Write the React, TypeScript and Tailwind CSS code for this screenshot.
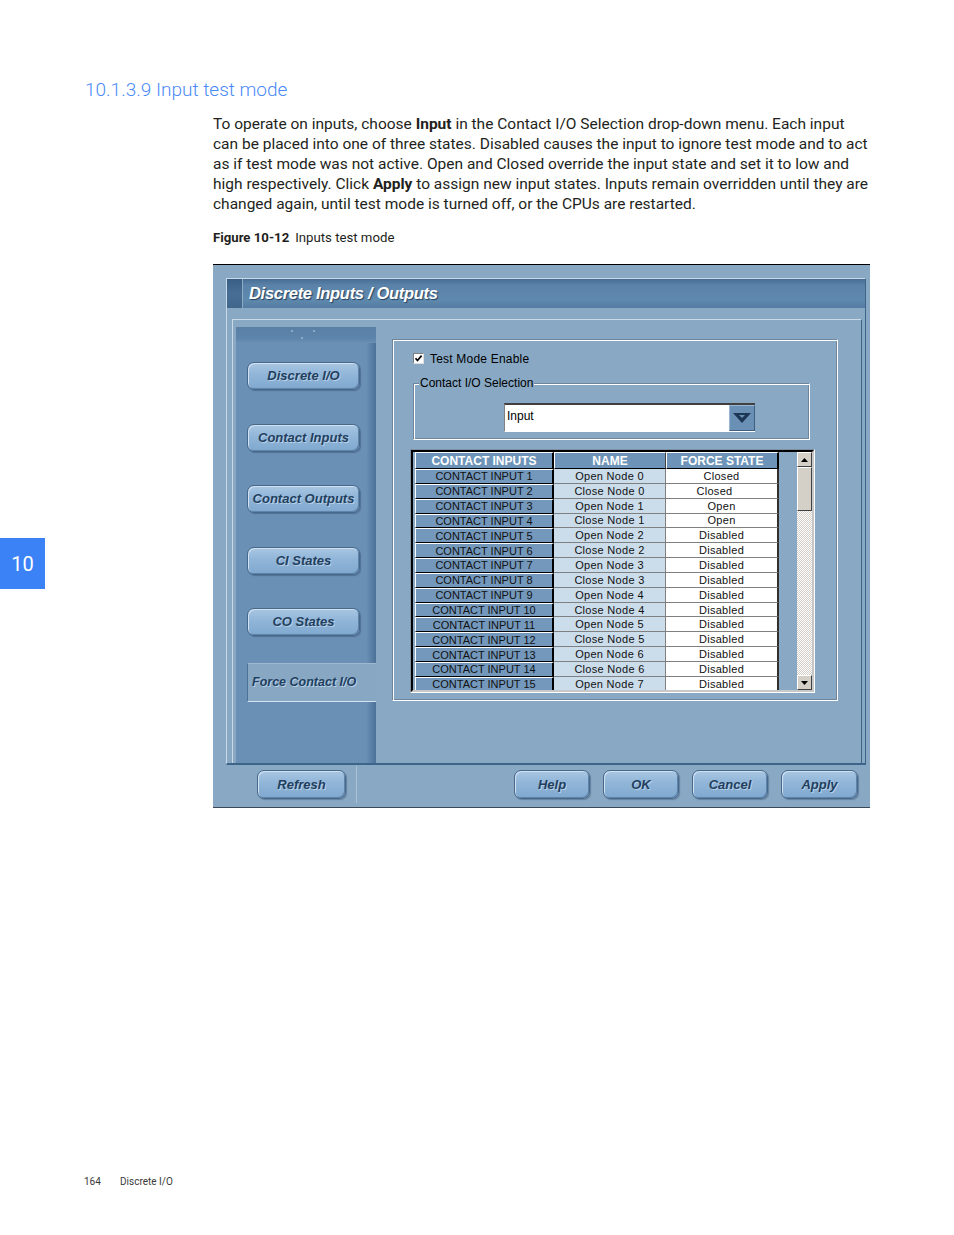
import React from "react";

const rows: [string, string][] = [
  ["Open Node 0", "Closed"],
  ["Close Node 0", "Closed"],
  ["Open Node 1", "Open"],
  ["Close Node 1", "Open"],
  ["Open Node 2", "Disabled"],
  ["Close Node 2", "Disabled"],
  ["Open Node 3", "Disabled"],
  ["Close Node 3", "Disabled"],
  ["Open Node 4", "Disabled"],
  ["Close Node 4", "Disabled"],
  ["Open Node 5", "Disabled"],
  ["Close Node 5", "Disabled"],
  ["Open Node 6", "Disabled"],
  ["Close Node 6", "Disabled"],
  ["Open Node 7", "Disabled"],
];

function NavBtn({ label, mt }: { label: string; mt: string }) {
  return (
    <div
      className={`${mt} ml-[11px] w-[113px] h-[28px] shrink-0 rounded-[7px] border border-[#46688b] bg-[linear-gradient(180deg,#a8c6e2_0%,#90b5d8_45%,#80a8cf_100%)] shadow-[inset_1px_1px_0_#d2e2f1,inset_-1px_-1px_0_#5f84aa,1px_1px_1px_rgba(35,55,85,0.35)] flex items-center justify-center text-[13px] font-bold italic text-[#223f60] [text-shadow:1px_1px_0_#b8d0e6]`}
    >
      {label}
    </div>
  );
}

function Btn({ label, w }: { label: string; w: string }) {
  return (
    <div
      className={`${w} mt-[5px] h-[29px] shrink-0 rounded-[7px] border border-[#46688b] bg-[linear-gradient(180deg,#a8c6e2_0%,#90b5d8_45%,#80a8cf_100%)] shadow-[inset_1px_1px_0_#d2e2f1,inset_-1px_-1px_0_#5f84aa,1px_1px_1px_rgba(35,55,85,0.35)] flex items-center justify-center text-[13px] font-bold italic text-[#223f60] [text-shadow:1px_1px_0_#b8d0e6]`}
    >
      {label}
    </div>
  );
}

function ScrollBtn({ up }: { up: boolean }) {
  return (
    <div className="h-[15px] shrink-0 bg-[#d4d0c8] border border-t-white border-l-white border-r-[#404040] border-b-[#404040] flex items-center justify-center">
      <svg width="7" height="4" viewBox="0 0 7 4">
        {up ? <polygon points="0,4 7,4 3.5,0" fill="#000" /> : <polygon points="0,0 7,0 3.5,4" fill="#000" />}
      </svg>
    </div>
  );
}

export default function App() {
  return (
    <div className="relative w-[954px] h-[1235px] bg-white flex flex-col font-['Roboto','Open_Sans',sans-serif] text-[#231f20]">
      <h2 className="mt-[78px] ml-[85px] text-[19px] leading-[24px] font-light text-[#4a8af5]">
        10.1.3.9 Input test mode
      </h2>

      <div className="ml-[213px] mt-[12px] text-[15.5px] leading-[20px]">
        <div className="whitespace-nowrap">
          To operate on inputs, choose <b className="font-bold">Input</b> in the Contact I/O Selection drop-down menu. Each input
        </div>
        <div className="whitespace-nowrap">
          can be placed into one of three states. Disabled causes the input to ignore test mode and to act
        </div>
        <div className="whitespace-nowrap">
          as if test mode was not active. Open and Closed override the input state and set it to low and
        </div>
        <div className="whitespace-nowrap">
          high respectively. Click <b className="font-bold">Apply</b> to assign new input states. Inputs remain overridden until they are
        </div>
        <div className="whitespace-nowrap">
          changed again, until test mode is turned off, or the CPUs are restarted.
        </div>
      </div>

      <div className="ml-[213px] mt-[15px] text-[13.2px] leading-[18px]">
        <b className="font-bold">Figure 10-12</b>
        <span className="ml-[6px]">Inputs test mode</span>
      </div>

      {/* Figure */}
      <div className="ml-[213px] mt-[17px] w-[657px] h-[544px] shrink-0 bg-[#88a8c4] border-t border-t-black border-b border-b-[#3b4856] flex flex-col font-['Liberation_Sans',Arial,sans-serif]">
        {/* frame */}
        <div className="mt-[13px] ml-[13px] w-[640px] h-[487px] shrink-0 border-t border-l border-t-[#c9d9e7] border-l-[#c9d9e7] border-r border-r-[#3d6489] border-b-2 border-b-[#3d6489] flex flex-col">
          {/* title bar */}
          <div className="h-[29px] shrink-0 flex bg-[linear-gradient(180deg,#476d93_0%,#5b83a9_22%,#6089ae_70%,#557ca2_100%)]">
            <div className="w-[16px] bg-[linear-gradient(180deg,#395e84_0%,#486e95_50%,#40668c_100%)] border-r border-r-[#8eabc6]"></div>
            <div className="ml-[6px] flex items-center text-white font-bold italic text-[16.5px] tracking-[-0.3px] [text-shadow:1px_1px_1px_#23405e]">
              Discrete Inputs / Outputs
            </div>
          </div>

          {/* inner panel */}
          <div className="mt-[11px] ml-[5px] mr-[3px] flex-1 border-t border-l border-t-[#c9d9e7] border-l-[#c9d9e7] border-r border-r-[#3d6489] pl-[3px] pt-[7px] flex">
            {/* nav column */}
            <div className="w-[140px] flex flex-col bg-[linear-gradient(90deg,#6a90b5_0%,#6a90b5_93%,#4b7198_100%)]">
              <div className="h-[16px] shrink-0 bg-[linear-gradient(180deg,#5a80a6_0%,#5d84aa_70%,#6a90b5_100%)]">
                <svg width="140" height="16" viewBox="0 0 140 16" className="block">
                  <circle cx="56" cy="4" r="1" fill="#9ab6cf" />
                  <circle cx="66" cy="11" r="1" fill="#9ab6cf" />
                  <circle cx="78" cy="4" r="1" fill="#9ab6cf" />
                </svg>
              </div>
              <NavBtn label="Discrete I/O" mt="mt-[19px]" />
              <NavBtn label="Contact Inputs" mt="mt-[34px]" />
              <NavBtn label="Contact Outputs" mt="mt-[33px]" />
              <NavBtn label="CI States" mt="mt-[34px]" />
              <NavBtn label="CO States" mt="mt-[33px]" />
              <div className="mt-[27px] ml-[11px] w-[129px] h-[39px] shrink-0 bg-[#87a7c3] border-t border-t-[#9fb9d0] border-b border-b-[#d5e2ee] border-l border-l-[#4e7196] flex items-center pl-[4px] text-[12.5px] font-bold italic text-[#223f60] [text-shadow:1px_1px_0_#b8d0e6]">
                Force Contact I/O
              </div>
            </div>

            {/* content panel */}
            <div className="ml-[16px] mt-[12px] w-[446px] h-[362px] shrink-0 border border-t-[#6f859b] border-l-[#6f859b] border-r-white border-b-white shadow-[inset_1px_1px_0_#ffffff,inset_-1px_-1px_0_#6f859b] flex flex-col">
              {/* checkbox row */}
              <div className="mt-[13px] ml-[20px] flex items-center h-[11px]">
                <div className="w-[11px] h-[11px] bg-white border border-t-[#808080] border-l-[#808080] border-r-[#e0e0e0] border-b-[#e0e0e0] flex items-center justify-center">
                  <svg width="9" height="9" viewBox="0 0 9 9">
                    <path d="M1.5 4.2 L3.5 6.5 L7.6 1.6" stroke="#000" strokeWidth="1.7" fill="none" />
                  </svg>
                </div>
                <span className="ml-[6px] text-[12px] tracking-[0.2px] text-black leading-none">Test Mode Enable</span>
              </div>

              {/* group box */}
              <div className="relative mt-[19px] ml-[20px] w-[397px] h-[57px] shrink-0 border border-t-[#6f859b] border-l-[#6f859b] border-r-white border-b-white shadow-[inset_1px_1px_0_#ffffff,inset_-1px_-1px_0_#6f859b]">
                <span className="absolute -top-[8px] left-[5px] bg-[#88a8c4] px-[1px] text-[12px] leading-[14px] text-black">
                  Contact I/O Selection
                </span>
                <div className="mt-[19px] ml-[90px] w-[251px] h-[29px] flex border-t-2 border-t-[#404040] border-l border-l-[#808080] border-b border-b-white">
                  <div className="flex-1 bg-white pl-[2px] pt-[4px] text-[12px] leading-[14px] text-black">Input</div>
                  <div className="w-[26px] bg-[#6a90b5] border border-t-[#9ab8d4] border-l-[#9ab8d4] border-r-[#3c5e80] border-b-[#3c5e80] flex items-center justify-center">
                    <svg width="18" height="10" viewBox="0 0 18 10">
                      <polygon points="0,0 18,0 9,10" fill="#1d3654" />
                      <polygon points="6,2 12,2 9,5" fill="#6a90b5" />
                    </svg>
                  </div>
                </div>
              </div>

              {/* table container */}
              <div className="mt-[9px] ml-[17px] w-[405px] h-[244px] shrink-0 border border-t-[#7d8fa1] border-l-[#7d8fa1] border-r-white border-b-white">
                <div className="w-full h-full border-2 border-t-black border-l-black border-r-[#c8c8c8] border-b-[#c8c8c8] flex">
                  <div className="pl-[2px] w-[366px] h-full overflow-hidden flex flex-col">
                    <div className="flex h-[17px] shrink-0 text-[12px] font-bold text-white leading-none">
                      <div className="w-[139px] bg-[#6d94b8] border-t border-l border-t-white border-l-white border-r-2 border-b border-r-black border-b-black flex items-center justify-center">
                        CONTACT INPUTS
                      </div>
                      <div className="w-[112px] bg-[#6d94b8] border-t border-l border-t-white border-l-white border-r border-b border-r-[#404040] border-b-black flex items-center justify-center">
                        NAME
                      </div>
                      <div className="w-[113px] bg-[#6d94b8] border-t border-l border-t-white border-l-white border-r-2 border-b border-r-black border-b-black flex items-center justify-center">
                        FORCE STATE
                      </div>
                    </div>
                    {rows.map((r, i) => (
                      <div key={i} className="flex h-[14.85px] shrink-0 text-[11px] leading-none text-[#111]">
                        <div className="w-[139px] pt-[1px] bg-[#7498bc] border-t border-l border-t-white border-l-white border-r-2 border-b border-r-black border-b-black flex items-center justify-center">
                          CONTACT INPUT {i + 1}
                        </div>
                        <div className="w-[112px] pt-[1px] bg-[#cbdceb] border-b border-r border-b-[#808080] border-r-[#808080] flex items-center justify-center tracking-[0.3px]">
                          {r[0]}
                        </div>
                        <div
                          className={`w-[113px] pt-[1px] bg-white border-b border-b-[#808080] border-r-2 border-r-[#303030] flex items-center justify-center tracking-[0.3px] ${i === 1 ? "pr-[14px]" : ""}`}
                        >
                          {r[1]}
                        </div>
                      </div>
                    ))}
                  </div>
                  <div className="flex-1" />
                  <div className="w-[15px] h-full flex flex-col">
                    <ScrollBtn up={true} />
                    <div className="h-[44px] shrink-0 bg-[#d4d0c8] border border-t-white border-l-white border-r-[#404040] border-b-[#404040]" />
                    <div className="flex-1 bg-[repeating-conic-gradient(#d4d0c8_0%_25%,#ffffff_0%_50%)] bg-[length:2px_2px]" />
                    <ScrollBtn up={false} />
                  </div>
                </div>
              </div>
            </div>
          </div>
        </div>

        {/* bottom buttons bar */}
        <div className="flex-1 flex items-start">
          <div className="ml-[44px]">
            <Btn label="Refresh" w="w-[89px]" />
          </div>
          <div className="ml-[10px] mt-[1px] w-px h-[37px] bg-[#a9c1d6]" />
          <div className="ml-auto mr-[12px] flex gap-[13px]">
            <Btn label="Help" w="w-[76px]" />
            <Btn label="OK" w="w-[76px]" />
            <Btn label="Cancel" w="w-[76px]" />
            <Btn label="Apply" w="w-[77px]" />
          </div>
        </div>
      </div>

      {/* footer */}
      <div className="mt-auto mb-[46px] ml-[84px] flex text-[10px] leading-[14px] text-[#3a3a3a]">
        <span className="w-[36px]">164</span>
        <span>Discrete I/O</span>
      </div>

      {/* chapter tab */}
      <div className="absolute left-0 top-[538px] w-[45px] h-[51px] bg-[#3b82f6] flex items-center justify-center text-white text-[20px]">
        10
      </div>
    </div>
  );
}
